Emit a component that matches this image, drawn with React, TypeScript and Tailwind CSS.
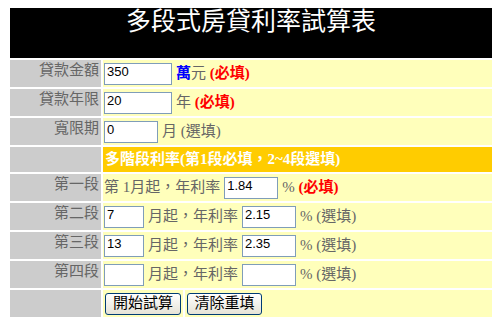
const cjk = "font-['Liberation_Serif','Noto_Sans_CJK_TC',serif]";

function Field({ value, w }: { value: string; w: string }) {
  return (
    <input
      defaultValue={value}
      className={`${w} h-[22px] shrink-0 border border-[#7f9db9] bg-white pl-[2px] pb-[5px] text-[13px] leading-[14px] text-black font-['Liberation_Sans',sans-serif] outline-none`}
    />
  );
}

function Label({ text }: { text: string }) {
  return (
    <div className="bg-[#cccccc] h-[27px] pr-[2px] pt-[3px] text-right text-[15px] leading-[15px] text-[#666666]">
      {text}
    </div>
  );
}

const Required = () => <span className="font-bold text-[#ff0000]">(必填)</span>;
const Optional = () => <span>(選填)</span>;

function Stage({ label, start, rate }: { label: string; start: string; rate: string }) {
  return (
    <>
      <Label text={label} />
      <div className="col-span-2 bg-[#ffffbb] flex items-center gap-[4px] pl-[1px] text-[15px] text-[#666666]">
        <Field value={start} w="w-[40px]" />
        <span>月起，年利率</span>
        <Field value={rate} w="w-[54px]" />
        <span>% <Optional /></span>
      </div>
    </>
  );
}

export default function App() {
  return (
    <div className={`ml-[10px] mt-2 w-[482px] ${cjk}`}>
      <div className="h-[50px] bg-black text-center text-[25px] leading-[25px] pt-[1px] text-white">
        多段式房貸利率試算表
      </div>
      <div className="mt-[2px] grid grid-cols-[91px_80px_1fr] gap-[2px]">
        <Label text="貸款金額" />
        <div className="col-span-2 bg-[#ffffbb] flex items-center gap-[4px] pl-[1px] text-[15px] text-[#666666]">
          <Field value="350" w="w-[68px]" />
          <span>
            <b className="text-[#0000ff]">萬</b>元 <Required />
          </span>
        </div>

        <Label text="貸款年限" />
        <div className="col-span-2 bg-[#ffffbb] flex items-center gap-[4px] pl-[1px] text-[15px] text-[#666666]">
          <Field value="20" w="w-[68px]" />
          <span>
            年 <Required />
          </span>
        </div>

        <Label text="寬限期" />
        <div className="col-span-2 bg-[#ffffbb] flex items-center gap-[4px] pl-[1px] text-[15px] text-[#666666]">
          <Field value="0" w="w-[54px]" />
          <span>
            月 <Optional />
          </span>
        </div>

        <div className="bg-[#cccccc] h-[25px]" />
        <div className="col-span-2 bg-[#ffcc00] flex items-center pl-[2px] text-[15px] font-bold text-white">
          多階段利率(第1段必填，2~4段選填)
        </div>

        <Label text="第一段" />
        <div className="col-span-2 bg-[#ffffbb] flex items-center gap-[4px] pl-[1px] text-[15px] text-[#666666]">
          <span>第 1月起，年利率</span>
          <Field value="1.84" w="w-[54px]" />
          <span>
            % <Required />
          </span>
        </div>

        <Stage label="第二段" start="7" rate="2.15" />
        <Stage label="第三段" start="13" rate="2.35" />
        <Stage label="第四段" start="" rate="" />

        <div className="bg-[#cccccc] h-[27px]" />
        <div className="bg-[#ffffbb] flex items-center pl-[2px]">
          <button className="w-[76px] h-[22px] rounded-[3px] border border-[#003c74] bg-linear-to-b from-white to-[#e6e3d6] text-[15px] leading-[15px] text-black">
            開始試算
          </button>
        </div>
        <div className="bg-[#ffffbb] flex items-center pl-[2px]">
          <button className="w-[75px] h-[22px] rounded-[3px] border border-[#003c74] bg-linear-to-b from-white to-[#e6e3d6] text-[15px] leading-[15px] text-black">
            清除重填
          </button>
        </div>
      </div>
    </div>
  );
}
